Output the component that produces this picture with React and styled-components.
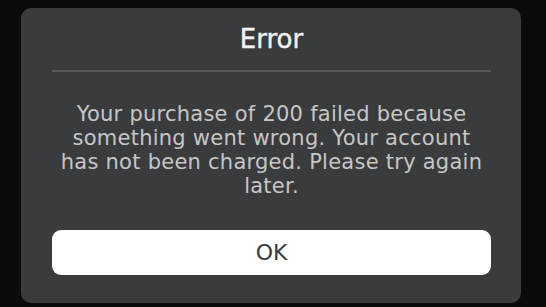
import React from 'react'
import styled, { createGlobalStyle } from 'styled-components'

const GlobalStyle = createGlobalStyle`
  html, body {
    margin: 0;
    padding: 0;
    background: #0b0b0b;
  }
  body {
    width: 546px;
    height: 307px;
    overflow: hidden;
    font-family: "DejaVu Sans", "Liberation Sans", sans-serif;
  }
`

const App = () => {
  return (
    <>
      <GlobalStyle />
      <Screen>
        <Dialog>
          <Header>
            <Title>Error</Title>
          </Header>
          <Divider />
          <Message>
            Your purchase of 200 failed because<br />
            something went wrong. Your account<br />
            has not been charged. Please try again<br />
            later.
          </Message>
          <OkButton>OK</OkButton>
        </Dialog>
      </Screen>
    </>
  )
}

const Screen = styled.div`
  width: 546px;
  height: 307px;
  display: flex;
  justify-content: flex-start;
  padding: 8px 0 0 21px;
  box-sizing: border-box;
`

const Dialog = styled.div`
  width: 500px;
  height: 295px;
  box-sizing: border-box;
  background: #3a3b3d;
  border-radius: 10px;
  padding: 0 30px 0 31px;
  display: flex;
  flex-direction: column;
  align-items: stretch;
`

const Header = styled.div`
  height: 62px;
  display: flex;
  align-items: center;
  justify-content: center;
`

const Title = styled.h1`
  margin: 0;
  font-size: 26px;
  font-weight: 500;
  color: #f2f2f2;
  -webkit-text-stroke: 0.4px #f2f2f2;
`

const Divider = styled.div`
  height: 2px;
  background: #56575a;
`

const Message = styled.p`
  margin: 30px 0 0;
  font-size: 21px;
  letter-spacing: 0.25px;
  line-height: 24px;
  text-align: center;
  color: #c6c6c6;
  white-space: nowrap;
`

const OkButton = styled.button`
  margin-top: 32px;
  height: 45px;
  border: none;
  border-radius: 9px;
  background: #ffffff;
  color: #393b3d;
  font-family: inherit;
  font-size: 22px;
  cursor: pointer;
`

export default App
